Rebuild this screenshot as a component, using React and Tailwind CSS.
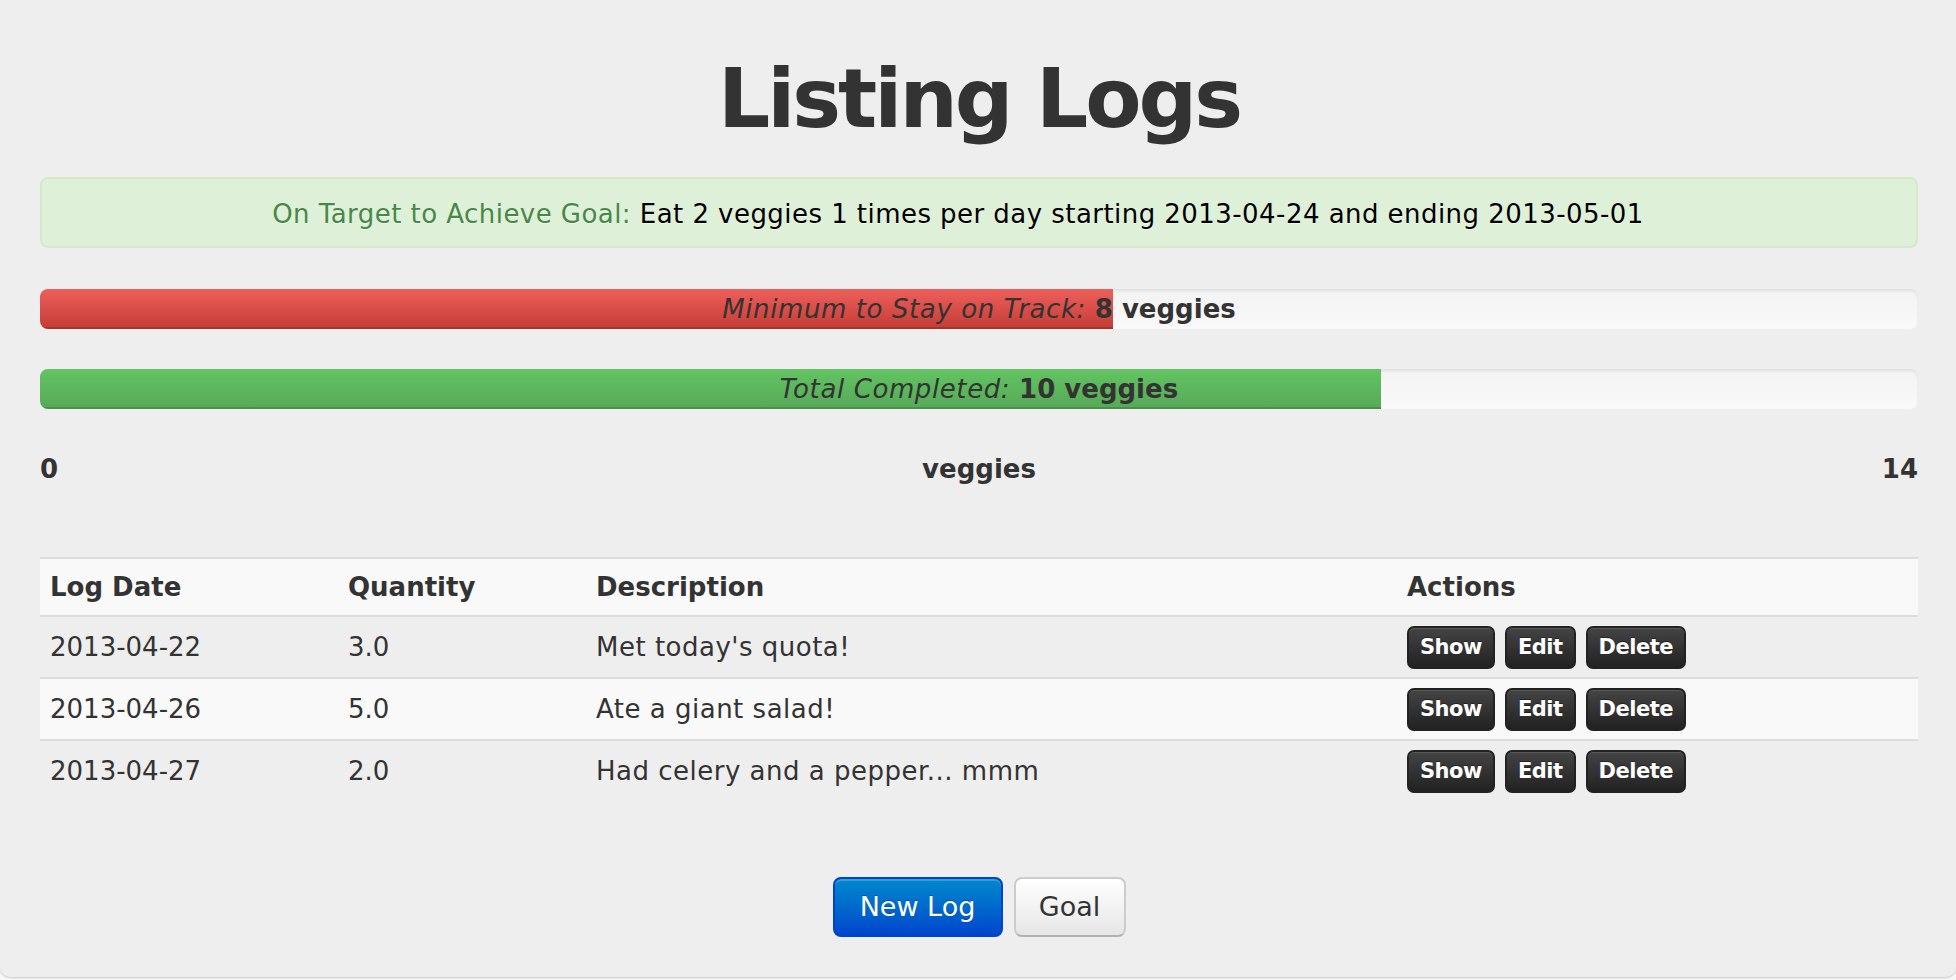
import React from 'react';

const logs = [
    { date: '2013-04-22', qty: '3.0', desc: "Met today's quota!" },
    { date: '2013-04-26', qty: '5.0', desc: 'Ate a giant salad!' },
    { date: '2013-04-27', qty: '2.0', desc: 'Had celery and a pepper... mmm' },
];

function ProgressTrack({ value, max, color, label, amount }) {
    const fill = color === 'red'
        ? 'bg-linear-to-b from-[#ee5f5b] to-[#c43c35]'
        : 'bg-linear-to-b from-[#62c462] to-[#57a957]';
    return (
        <div className="relative h-[40px] rounded-[8px] overflow-hidden bg-linear-to-b from-[#f3f3f3] to-[#f9f9f9] shadow-[inset_0_2px_3px_rgba(0,0,0,0.08)]">
            <div
                className={`absolute inset-y-0 left-0 ${fill} shadow-[inset_0_-2px_0_rgba(0,0,0,0.15)]`}
                style={{ width: `${(value / max) * 100}%` }}
            />
            <div className="relative text-center text-[26px] leading-[40px] text-[#333]">
                <span className="italic tracking-[0.6px]">{label}: </span>
                <span className="font-bold">{amount}</span>
            </div>
        </div>
    );
}

function DarkButton({ children }) {
    return (
        <button className="h-[43px] px-[11px] rounded-[7px] border-2 border-[#222] bg-linear-to-b from-[#444] to-[#222] text-white text-[21px] font-bold leading-none tracking-[-0.5px] [text-shadow:0_-1px_0_rgba(0,0,0,0.4)] shadow-[inset_0_1px_0_rgba(255,255,255,0.12)]">
            {children}
        </button>
    );
}

export default function App() {
    return (
        <div className="min-h-screen bg-[#f8f8f8] font-['DejaVu_Sans',Verdana,sans-serif]">
            <div className="bg-[#eeeeee] rounded-b-[10px] shadow-[0_1px_2px_rgba(0,0,0,0.2)] pt-[58px] pb-[40px] pl-[40px] pr-[38px]">
                <h1 className="text-center text-[82px] leading-[82px] font-bold tracking-[-3px] text-[#333]">
                    Listing Logs
                </h1>

                <div className="mt-[37px] rounded-[8px] border-2 border-[#d6e9c6] bg-[#dff0d8] pt-[17px] pb-[14px] pl-[28px] pr-[70px] text-center text-[26px] leading-[36px] tracking-[0.45px] [text-shadow:0_1px_0_rgba(255,255,255,0.5)]">
                    <span className="text-[#468847]">On Target to Achieve Goal: </span>
                    <span className="text-black">Eat 2 veggies 1 times per day starting 2013-04-24 and ending 2013-05-01</span>
                </div>

                <div className="mt-[41px]">
                    <ProgressTrack value={8} max={14} color="red" label="Minimum to Stay on Track" amount="8 veggies" />
                </div>
                <div className="mt-[40px]">
                    <ProgressTrack value={10} max={14} color="green" label="Total Completed" amount="10 veggies" />
                </div>

                <div className="mt-[40px] grid grid-cols-3 text-[26px] leading-[40px] font-bold text-[#333]">
                    <div className="text-left">0</div>
                    <div className="text-center">veggies</div>
                    <div className="text-right">14</div>
                </div>

                <div className="mt-[68px] text-[26px] text-[#333]">
                    <div className="grid grid-cols-[298px_248px_811px_1fr] items-center h-[58px] border-t-2 border-[#dddddd] bg-[#f9f9f9] font-bold">
                        <div className="pl-[10px]">Log Date</div>
                        <div className="pl-[10px]">Quantity</div>
                        <div className="pl-[10px]">Description</div>
                        <div className="pl-[10px]">Actions</div>
                    </div>
                    {logs.map((log, i) => (
                        <div
                            key={log.date}
                            className={`grid grid-cols-[298px_248px_811px_1fr] items-center h-[62px] border-t-2 border-[#dddddd] ${i % 2 === 1 ? 'bg-[#f9f9f9]' : ''}`}
                        >
                            <div className="pl-[10px]">{log.date}</div>
                            <div className="pl-[10px]">{log.qty}</div>
                            <div className="pl-[10px] tracking-[0.5px]">{log.desc}</div>
                            <div className="pl-[10px] flex gap-[10px]">
                                <DarkButton>Show</DarkButton>
                                <DarkButton>Edit</DarkButton>
                                <DarkButton>Delete</DarkButton>
                            </div>
                        </div>
                    ))}
                </div>

                <div className="mt-[76px] flex justify-center gap-[11px]">
                    <button className="w-[170px] h-[60px] rounded-[8px] border-2 border-[#0044cc] bg-linear-to-b from-[#0088cc] to-[#0044cc] text-white text-[27px] [text-shadow:0_-1px_0_rgba(0,0,0,0.25)] shadow-[inset_0_2px_0_rgba(255,255,255,0.2)]">
                        New Log
                    </button>
                    <button className="w-[112px] h-[60px] rounded-[8px] border-2 border-[#cccccc] border-b-[#b3b3b3] bg-linear-to-b from-white to-[#e6e6e6] text-[#333] text-[27px] [text-shadow:0_1px_0_rgba(255,255,255,0.75)]">
                        Goal
                    </button>
                </div>
            </div>
        </div>
    );
}
